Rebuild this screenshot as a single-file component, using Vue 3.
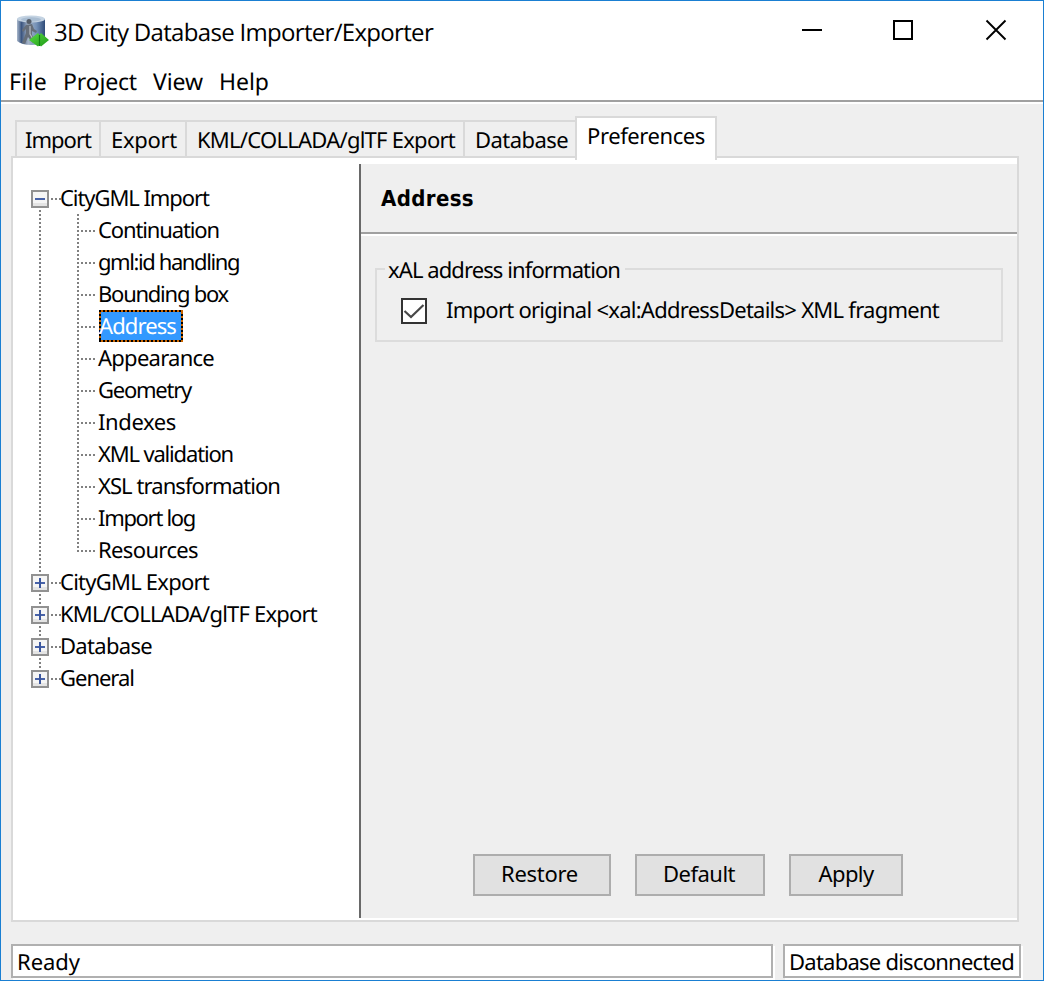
<script setup>
const setWidth = (el, { value }) => {
  el.style.letterSpacing = '0px'
  const natural = el.getBoundingClientRect().width
  el.style.letterSpacing = `${(value - natural) / el.textContent.length}px`
}
const vFit = { mounted: setWidth }

const menus = [
  { label: 'File', w: 38 },
  { label: 'Project', w: 74 },
  { label: 'View', w: 50 },
  { label: 'Help', w: 50 },
]
const tabs = [
  { label: 'Import', w: 66, width: 84 },
  { label: 'Export', w: 66, width: 86 },
  { label: 'KML/COLLADA/glTF Export', w: 258, width: 278 },
  { label: 'Database', w: 93, width: 112 },
  { label: 'Preferences', w: 118, width: 142, active: true },
]
const tree = [
  {
    label: 'CityGML Import', w: 149, open: true,
    children: [
      { label: 'Continuation', w: 121 },
      { label: 'gml:id handling', w: 141 },
      { label: 'Bounding box', w: 130 },
      { label: 'Address', w: 77, selected: true },
      { label: 'Appearance', w: 116 },
      { label: 'Geometry', w: 93 },
      { label: 'Indexes', w: 78 },
      { label: 'XML validation', w: 135 },
      { label: 'XSL transformation', w: 182 },
      { label: 'Import log', w: 97 },
      { label: 'Resources', w: 100 },
    ],
  },
  { label: 'CityGML Export', w: 149 },
  { label: 'KML/COLLADA/glTF Export', w: 257 },
  { label: 'Database', w: 92 },
  { label: 'General', w: 74 },
]
const buttons = [
  { label: 'Restore', w: 77, cls: 'restore' },
  { label: 'Default', w: 72, cls: 'default' },
  { label: 'Apply', w: 55, cls: 'apply' },
]
</script>

<template>
  <div class="window">
    <header class="titlebar">
      <svg class="logo" width="34" height="34" viewBox="0 0 34 34">
        <defs>
          <linearGradient id="cyl" x1="0" x2="1">
            <stop offset="0" stop-color="#a9b8cc" />
            <stop offset=".16" stop-color="#3c5680" />
            <stop offset=".4" stop-color="#a5b4c8" />
            <stop offset=".7" stop-color="#7390b6" />
            <stop offset="1" stop-color="#2f4b78" />
          </linearGradient>
          <linearGradient id="arrow" x1="0" x2="1" y2="1">
            <stop offset="0" stop-color="#5cdc44" />
            <stop offset="1" stop-color="#1d9a16" />
          </linearGradient>
        </defs>
        <path d="M1 4v22q5 4 14 4t14-4V4z" fill="url(#cyl)" />
        <ellipse cx="15" cy="4" rx="14" ry="3.6" fill="#c4d3e2" />
        <ellipse cx="15" cy="4.500" rx="10" ry="2.200" fill="#a9bdd2" />
        <circle cx="13" cy="6.500" r="2.500" fill="#555d68" />
        <path d="M10 10l6-1 2 5 3 2-1 2-4-2v4l4 6-3 2-5-6-3 7-3-1 4-10v-4l-3 3-1-2z" fill="#666e79" />
        <path d="M14 11v8l3 5" fill="none" stroke="#b9bec6" stroke-width="1.200" />
        <path d="M13 25l9-7 1.500 2 1.500-2 8 7-8 6.500-1.500-1.500-1.500 1.500z" fill="url(#arrow)" />
        <path d="M23.500 20v11" stroke="#128013" stroke-width="1.200" />
      </svg>
      <h1 class="title"><span v-fit="379">3D City Database Importer/Exporter</span></h1>
      <svg class="controls" width="206" height="22" viewBox="0 0 206 22" fill="none" stroke="#000" stroke-width="2">
        <path d="M0 11h20" />
        <rect x="92" y="2" width="18" height="18" />
        <path d="M184.500 1.500l19 19M203.500 1.500l-19 19" stroke-width="1.900" />
      </svg>
    </header>
    <nav class="menubar">
      <div v-for="m in menus" :key="m.label" class="menu"><span v-fit="m.w">{{ m.label }}</span></div>
    </nav>

    <main class="body">
      <div class="tabs">
        <div v-for="t in tabs" :key="t.label" class="tab" :class="{ active: t.active }" :style="{ width: `${t.width}px` }">
          <span v-fit="t.w">{{ t.label }}</span>
        </div>
      </div>

      <div class="pane">
        <div class="tree">
          <div v-for="n in tree" :key="n.label" class="node">
            <div class="row">
              <svg class="toggle" width="18" height="18" viewBox="0 0 18 18">
                <rect x="1" y="1" width="16" height="16" fill="#f5f5f5" stroke="#919191" stroke-width="2" />
                <path d="M2 13h14v3H2z" fill="#e4e4e4" />
                <path d="M4 9h10" stroke="#4762a8" stroke-width="2" />
                <path v-if="!n.open" d="M9 4v10" stroke="#3a559c" stroke-width="2" />
              </svg>
              <i class="stub"></i>
              <span v-fit="n.w">{{ n.label }}</span>
            </div>
            <div v-if="n.children" class="children">
              <div v-for="c in n.children" :key="c.label" class="row child">
                <i class="branch"></i>
                <div class="leaf" :class="{ selected: c.selected }"><span v-fit="c.w">{{ c.label }}</span></div>
              </div>
            </div>
          </div>
        </div>

        <section class="detail">
          <h2 class="heading"><span v-fit="93">Address</span></h2>
          <div class="content">
            <div class="group">
              <div class="legend"><span v-fit="232">xAL address information</span></div>
              <label class="option">
                <svg width="26" height="26" viewBox="0 0 26 26">
                  <rect x="1" y="1" width="24" height="24" fill="#fff" stroke="#333" stroke-width="2" />
                  <path d="M3.500 13l6.500 6L22.500 7" fill="none" stroke="#484848" stroke-width="2.200" />
                </svg>
                <span v-fit="493" class="caption">Import original &lt;xal:AddressDetails&gt; XML fragment</span>
              </label>
            </div>
            <div class="actions">
              <button v-for="b in buttons" :key="b.label" :class="b.cls"><span v-fit="b.w">{{ b.label }}</span></button>
            </div>
          </div>
        </section>
      </div>

      <footer class="status">
        <div class="cell message"><span v-fit="63">Ready</span></div>
        <div class="cell connection"><span v-fit="225">Database disconnected</span></div>
      </footer>
    </main>
  </div>
</template>

<style>
html, body { margin: 0; overflow: hidden; }
</style>

<style scoped>
.window {
  box-sizing: border-box;
  width: 1044px;
  height: 981px;
  border: 1px solid #1a7fd2;
  background: #fff;
  display: flex;
  flex-direction: column;
  font: 22px/32px "Noto Sans", sans-serif;
  color: #000;
  text-rendering: geometricPrecision;
  white-space: nowrap;
  overflow: hidden;
}
.window * { box-sizing: border-box; }
span { display: inline-block; white-space: pre; }
.titlebar { height: 63px; display: flex; align-items: flex-start; flex: none; }
.logo { margin: 14px 0 0 15px; }
.title { margin: 16px 0 0 4px; font: 24px/32px "Open Sans", sans-serif; }
.controls { margin: 18px 35px 0 auto; }
.menubar {
  height: 38px;
  flex: none;
  display: flex;
  gap: 16px;
  padding: 1px 0 0 8px;
  font-size: 23px;
  border-bottom: 2px solid #a0a0a0;
}
.body {
  flex: 1;
  border-top: 2px solid #fff;
  background: #efefef;
  padding: 12px 24px 0 10px;
  display: flex;
  flex-direction: column;
}
.tabs { height: 43px; display: flex; align-items: flex-end; padding-left: 4px; flex: none; position: relative; z-index: 1; }
.tab {
  flex: none;
  height: 36px;
  margin-bottom: 3px;
  border: 2px solid #d9d9d9;
  border-width: 2px 0 0 2px;
  padding: 2px 0 0 10px;
}
.tab:first-child { padding-left: 8px; }
.tab.active { height: 44px; margin-bottom: -1px; padding-top: 2px; border-right-width: 2px; background: #fff; }
.pane { height: 766px; margin-top: -3px; flex: none; border: 2px solid #d9d9d9; background: #fff; display: flex; padding: 6px 0 2px; }
.tree { width: 346px; padding: 18px 0 0 18px; }
.node { position: relative; }
.node:not(:last-child)::before {
  content: "";
  position: absolute;
  left: 8px;
  top: 28px;
  bottom: -8px;
  width: 2px;
  background: repeating-linear-gradient(#808080 0 2px, transparent 2px 4px);
}
.row { height: 32px; display: flex; align-items: center; }
.toggle { position: relative; margin-top: 2px; }
.stub { width: 10px; height: 2px; margin: 2px -1px 0 2px; background: repeating-linear-gradient(90deg, #808080 0 2px, transparent 2px 4px); }
.children { margin-left: 46px; position: relative; }
.children::before {
  content: "";
  position: absolute;
  left: 0;
  top: 0;
  height: 338px;
  width: 2px;
  background: repeating-linear-gradient(#808080 0 2px, transparent 2px 4px);
}
.branch { width: 20px; height: 2px; margin-top: 2px; background: repeating-linear-gradient(90deg, #808080 0 2px, transparent 2px 4px); }
.leaf { height: 32px; padding-left: 1px; }
.leaf.selected {
  width: 84px;
  margin-left: 2px;
  padding-left: 0;
  color: #fff;
  background:
    repeating-linear-gradient(90deg, #000 0 2px, #cc6600 2px 4px) top / 100% 2px no-repeat,
    repeating-linear-gradient(90deg, #000 0 2px, #cc6600 2px 4px) bottom / 100% 2px no-repeat,
    repeating-linear-gradient(#000 0 2px, #cc6600 2px 4px) left / 2px 100% no-repeat,
    repeating-linear-gradient(#000 0 2px, #cc6600 2px 4px) right / 2px 100% no-repeat,
    #3399ff;
}
.detail { flex: 1; border-left: 2px solid #696969; background: #efefef; display: flex; flex-direction: column; }
.heading {
  height: 70px;
  margin: 0;
  padding: 20px 0 0 20px;
  font: bold 22px/32px "DejaVu Sans Condensed", "DejaVu Sans", sans-serif;
  font-stretch: condensed;
  border-bottom: 2px solid #a0a0a0;
  flex: none;
}
.content { flex: 1; border-top: 2px solid #fff; padding: 32px 14px 22px; display: flex; flex-direction: column; justify-content: space-between; }
.group { height: 74px; border: 2px solid #dcdcdc; }
.legend { width: 240px; height: 28px; margin: -14px 0 0 8px; padding-left: 3px; line-height: 28px; background: #efefef; }
.option { display: flex; align-items: center; gap: 19px; height: 34px; margin: 10px 0 0 24px; }
.caption { margin-bottom: 2px; }
.actions { display: flex; gap: 24px; padding-left: 98px; }
button { height: 42px; padding: 0 2px 4px 0; border: 2px solid #adadad; background: #e1e1e1; font: inherit; color: inherit; }
.restore { width: 138px; padding-right: 5px; }
.default { width: 130px; }
.apply { width: 114px; padding-right: 0; }
.status { display: flex; gap: 10px; margin-top: 22px; }
.cell { height: 34px; flex: none; border: 2px solid #b0b0b0; background: #fff; box-shadow: 2px 2px 0 #fff; padding-left: 4px; }
.message { width: 762px; }
.connection { width: 238px; }
</style>
